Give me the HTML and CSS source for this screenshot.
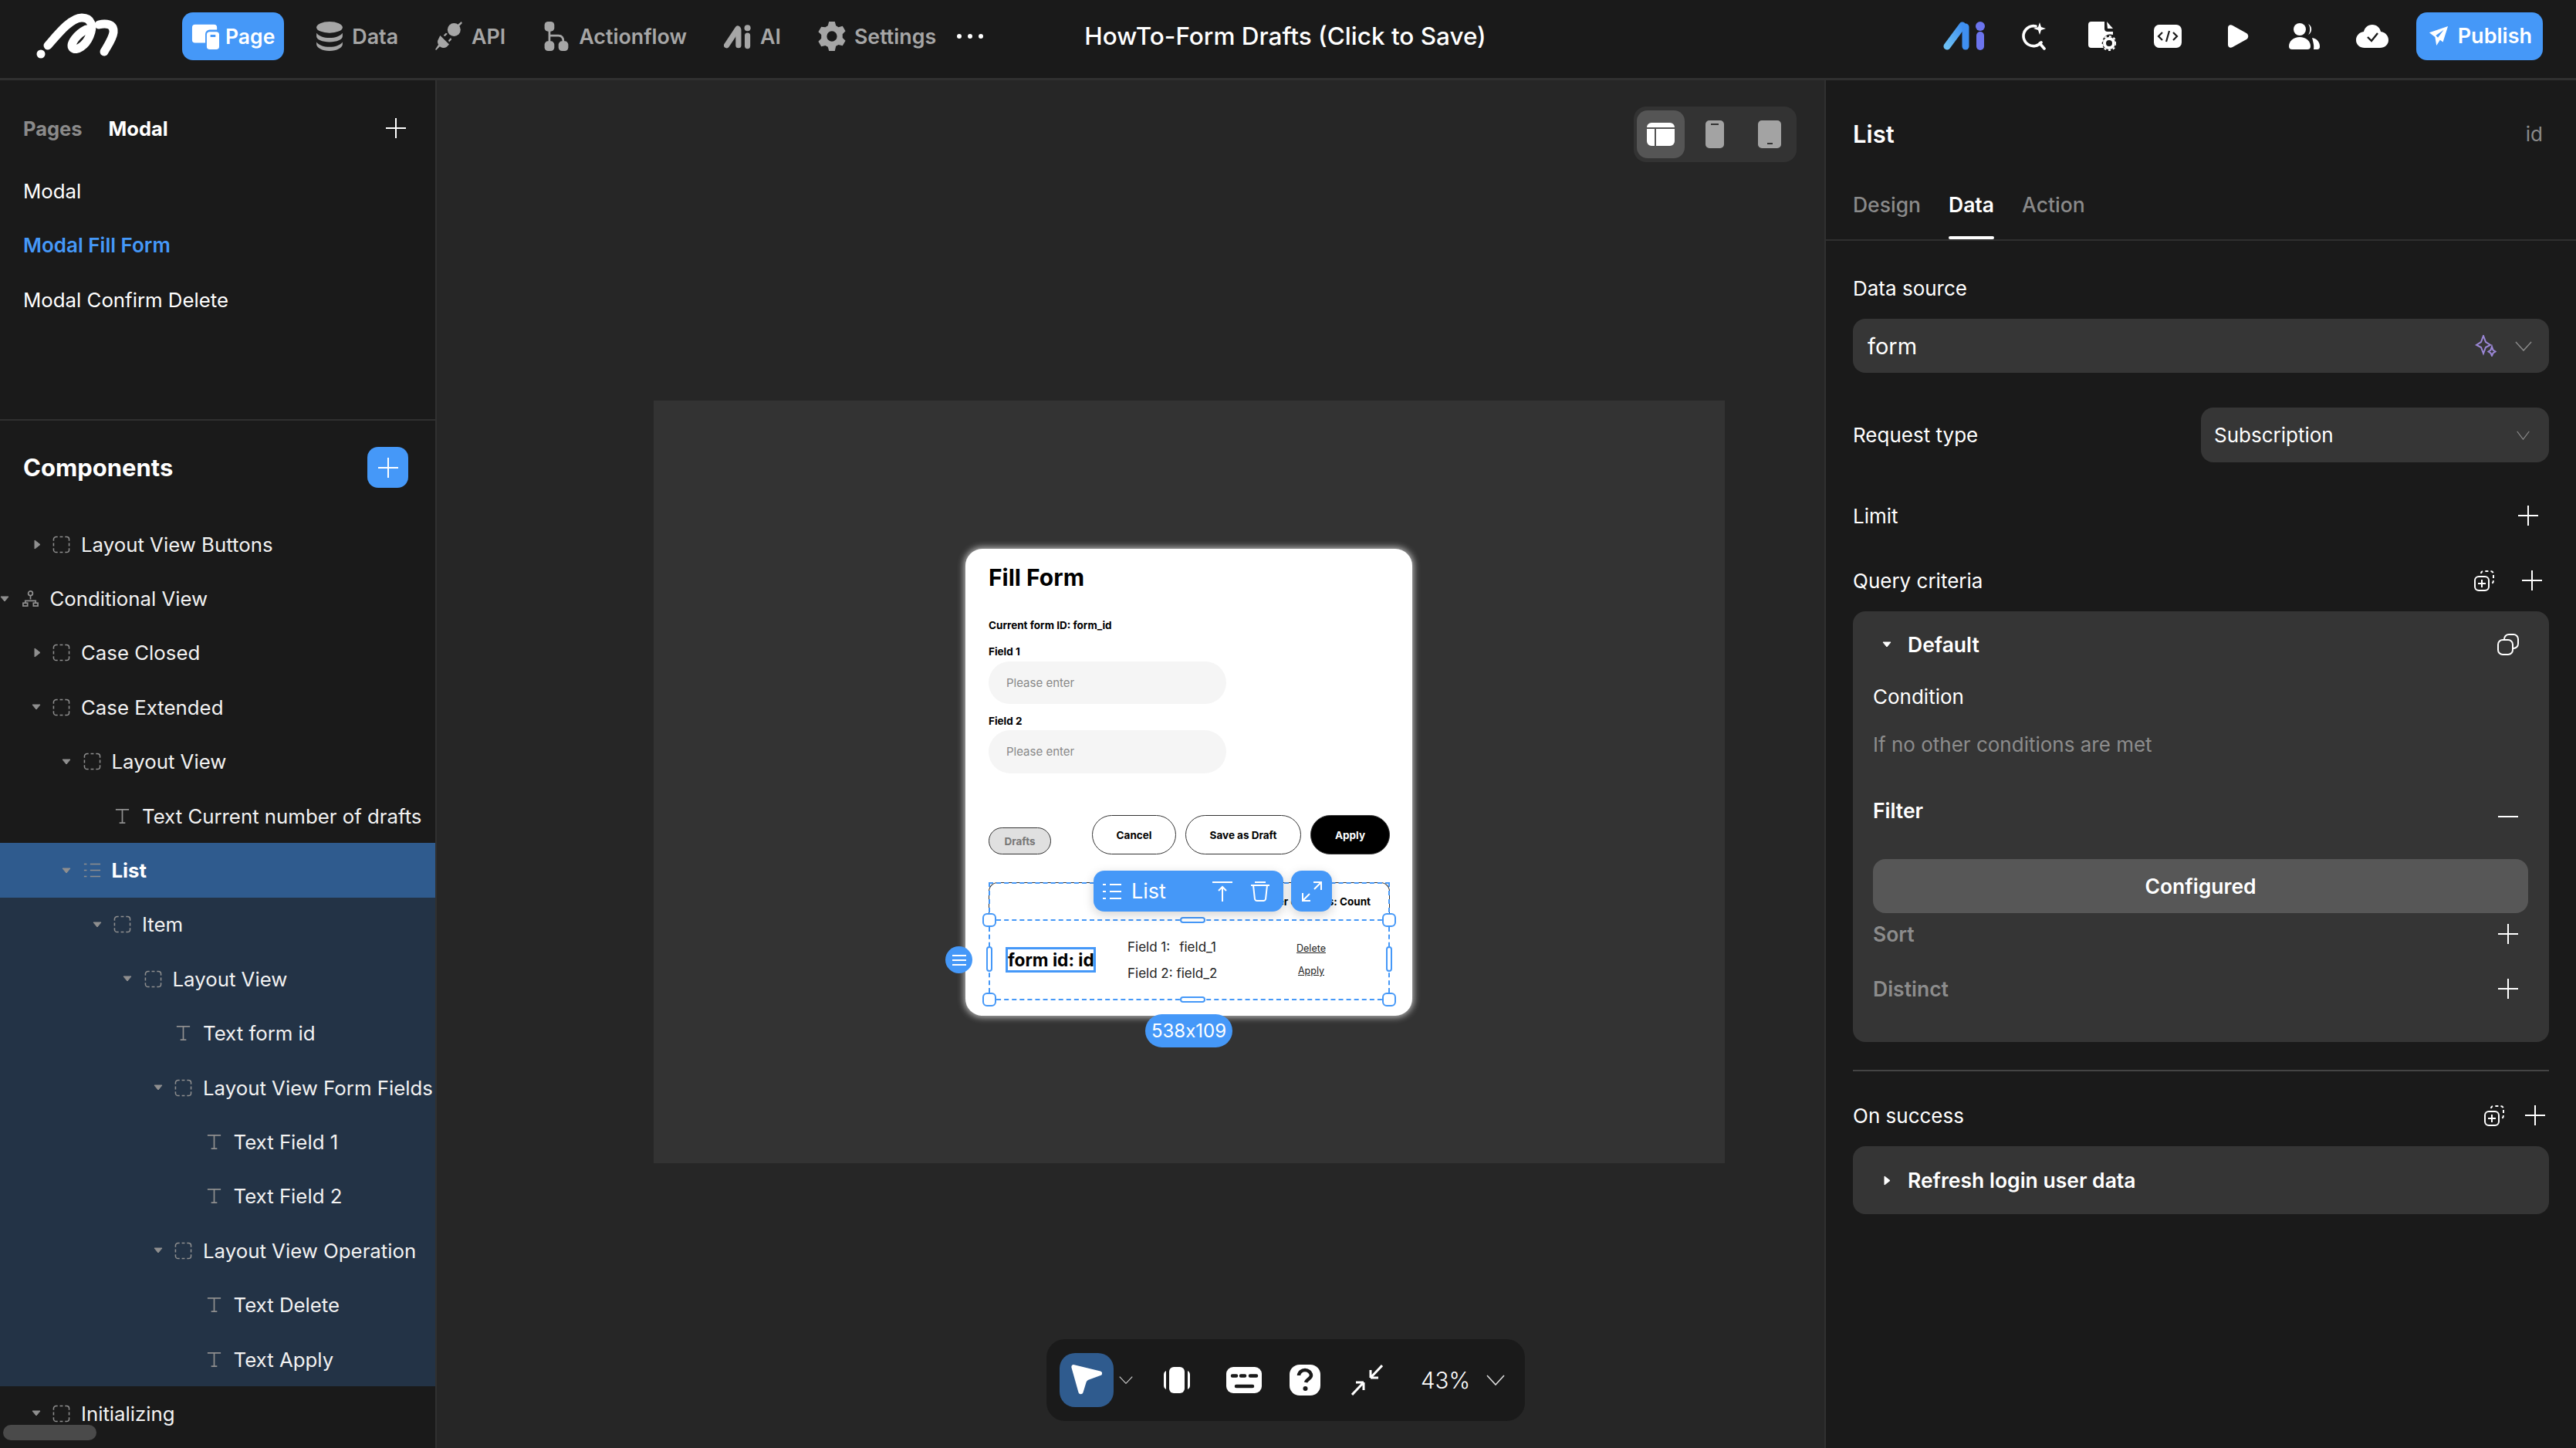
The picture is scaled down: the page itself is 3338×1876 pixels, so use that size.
FILE: index.html
```html
<!DOCTYPE html>
<html lang="en">
<head>
  <meta charset="UTF-8">
  <title>HowTo-Form Drafts</title>
  <link rel="stylesheet" href="styles.css">
</head>
<body>
  <svg class="sprite" xmlns="http://www.w3.org/2000/svg">
    <symbol id="i-plus" viewBox="0 0 28 28"><path d="M14 1v26M1 14h26" fill="none" stroke="currentColor" stroke-width="2"/></symbol>
    <symbol id="i-box" viewBox="0 0 24 24"><path d="M7 1.500H5a3.500 3.500 0 0 0-3.500 3.500v2M10 1.500h4M17 1.500h2a3.500 3.500 0 0 1 3.500 3.500v2M22.500 10v4M22.500 17v2a3.500 3.500 0 0 1-3.500 3.500h-2M14 22.500h-4M7 22.500H5A3.500 3.500 0 0 1 1.500 19v-2M1.500 14v-4" fill="none" stroke="currentColor" stroke-width="1.600"/></symbol>
    <symbol id="i-t" viewBox="0 0 24 24"><path d="M3 3h18M12 3v18M8 21h8" fill="none" stroke="currentColor" stroke-width="1.800"/></symbol>
    <symbol id="i-list" viewBox="0 0 26 24"><path d="M1 3h4M10 3h15M1 12h4M10 12h15M1 21h4M10 21h15" fill="none" stroke="currentColor" stroke-width="1.800"/></symbol>
    <symbol id="i-down" viewBox="0 0 12 8"><path d="M1 1h10L6 7z" fill="currentColor" stroke="currentColor" stroke-linejoin="round"/></symbol>
    <symbol id="i-right" viewBox="0 0 9 13"><path d="M1 1v11l7-5.500z" fill="currentColor" stroke="currentColor" stroke-linejoin="round"/></symbol>
    <symbol id="i-chev" viewBox="0 0 24 14" preserveAspectRatio="none"><path d="M1 1l11 12L23 1" fill="none" stroke="currentColor" stroke-width="1.600"/></symbol>
    <symbol id="i-addbox" viewBox="0 0 28 28"><rect x="2" y="9" width="18" height="18" rx="5" fill="none" stroke="currentColor" stroke-width="2"/><path d="M11 13v10M6 18h10" stroke="currentColor" stroke-width="2"/><path d="M10 5c0-2 1-3 4-3h8c3 0 4 2 4 4v8c0 2-1 4-3 4" fill="none" stroke="currentColor" stroke-width="2" stroke-dasharray="4 3"/></symbol>
  </svg>

  <header class="topbar">
    <div class="topbar-left">
      <svg class="logo" viewBox="0 0 108 60"><g fill="none" stroke="#fff" stroke-width="11" stroke-linecap="round"><path d="M14 42C28 26 44 6 58 6c12 0 16 10 10 24-5 12-17 20-22 15-4-5 6-18 18-24"/><path d="M80 15c8-2 20-2 19 10-1 8-8 18-12 25"/></g><circle cx="5" cy="53" r="5.500" fill="#fff"/></svg>
      <nav class="nav">
        <a class="nav-item active">
          <svg viewBox="0 0 38 36"><path fill="#fff" d="M5 2h26a4 4 0 0 1 4 4v3H25a6 6 0 0 0-6 6v12H5a4 4 0 0 1-4-4V6a4 4 0 0 1 4-4z"/><path fill="#fff" fill-rule="evenodd" d="M25 12h9a4 4 0 0 1 4 3v17a4 4 0 0 1-4 4h-9a4 4 0 0 1-4-4V16a4 4 0 0 1 4-4zm1 4v3h7v-3z"/></svg>
          Page</a>
        <a class="nav-item">
          <svg viewBox="0 0 34 36"><g fill="currentColor"><ellipse cx="17" cy="7" rx="16" ry="7"/><path d="M1 14c3 4 9 6 16 6s13-2 16-6v4c0 4-7 7-16 7S1 22 1 18z"/><path d="M1 25c3 4 9 6 16 6s13-2 16-6v3c0 4-7 8-16 8S1 32 1 28z"/></g></svg>
          Data</a>
        <a class="nav-item">
          <svg viewBox="0 0 34 36"><g fill="currentColor"><circle cx="23" cy="10" r="8"/><path d="M27 4l5-4 1 2-5 5z"/><path d="M6 17l11 11-3 3a7 7 0 0 1-9-1 7 7 0 0 1-1-9z"/><path d="M6 30l-5 5-1-1 4-6zM10 17l3-3 2 1-3 3zM16 23l3-3 1 2-3 3z"/></g></svg>
          API</a>
        <a class="nav-item">
          <svg viewBox="0 0 34 42"><g fill="currentColor"><rect x="0" y="0" width="14" height="14" rx="5"/><rect x="0" y="28" width="14" height="14" rx="5"/><rect x="20" y="28" width="14" height="14" rx="5"/></g><path d="M7 12v18M7 20h13c5 0 7 3 7 9" fill="none" stroke="currentColor" stroke-width="3"/></svg>
          Actionflow</a>
        <a class="nav-item">
          <svg viewBox="0 0 40 36"><path d="M4 31L20 7" fill="none" stroke="currentColor" stroke-width="8" stroke-linecap="round"/><path d="M21 9v22" stroke="currentColor" stroke-width="8" stroke-linecap="round"/><path d="M34 17v15" stroke="currentColor" stroke-width="8" stroke-linecap="round"/><circle cx="34" cy="6" r="4.500" fill="currentColor"/></svg>
          AI</a>
        <a class="nav-item">
          <svg viewBox="0 0 36 40"><path fill="currentColor" fill-rule="evenodd" d="M14 0h8l1.500 5.500 3.500 2 5.500-1.500 4 7-4 4v5l4 4-4 7-5.500-1.500-3.500 2L22 40h-8l-1.500-5.500-3.500-2-5.500 1.500-4-7 4-4v-5l-4-4 4-7L9 7.500l3.500-2zM18 13a7 7 0 1 0 0 14 7 7 0 0 0 0-14z"/></svg>
          Settings</a>
        <span class="nav-more"><i></i><i></i><i></i></span>
      </nav>
    </div>
    <div class="doc-title">HowTo-Form Drafts (Click to Save)</div>
    <div class="topbar-right">
      <svg class="ic-ai" viewBox="0 0 56 38"><defs><linearGradient id="ai-g" x1="0" y1="1" x2="1" y2="0"><stop offset="0" stop-color="#6cc0f5"/><stop offset="1" stop-color="#3f8ff0"/></linearGradient></defs><path d="M6 32L26 5" stroke="url(#ai-g)" stroke-width="9" stroke-linecap="round"/><path d="M30 7v25" stroke="#3f8ff0" stroke-width="9" stroke-linecap="round"/><circle cx="49" cy="6" r="6" fill="#6c74ee"/><path d="M49 18v14" stroke="#6c74ee" stroke-width="10" stroke-linecap="round"/></svg>
      <svg class="ic-search" viewBox="0 0 34 36"><path d="M20 5a13 13 0 1 0 7 21M25 27l6 7" fill="none" stroke="#fff" stroke-width="3.600" stroke-linecap="round"/><path d="M25 0l2 6 6 2-6 2-2 6-2-6-6-2 6-2z" fill="#fff"/></svg>
      <svg class="ic-doc" viewBox="0 0 36 38"><path fill="#fff" d="M4 0h17v9a4 4 0 0 0 4 4h7v4a11 11 0 0 0-12 17H4a4 4 0 0 1-4-4V4a4 4 0 0 1 4-4z"/><path fill="#fff" d="M24 0l8 9h-7z"/><circle cx="27" cy="28" r="6" fill="none" stroke="#fff" stroke-width="4"/><circle cx="27" cy="28" r="9" fill="none" stroke="#fff" stroke-width="2" stroke-dasharray="3 3"/></svg>
      <svg class="ic-code" viewBox="0 0 36 30"><rect width="36" height="30" rx="7" fill="#fff"/><path d="M11 10l-5 5 5 5M25 10l5 5-5 5M20 8l-4 14" fill="none" stroke="#1a1a1a" stroke-width="2.200"/></svg>
      <svg class="ic-play" viewBox="0 0 28 30"><path fill="#fff" d="M1 4c0-3 3-5 6-3l18 10c3 2 3 6 0 8L7 29c-3 2-6 0-6-3z"/></svg>
      <svg class="ic-users" viewBox="0 0 40 34"><g fill="#fff"><circle cx="14" cy="8" r="8"/><path d="M0 30c0-7 6-12 14-12s14 5 14 12c0 3-2 4-4 4H4c-2 0-4-1-4-4z"/><path d="M25 1a8 8 0 0 1 0 14c3-4 3-10 0-14z"/><path d="M30 19c6 1 10 5 10 11 0 3-1 4-4 4h-4c1-5-1-11-2-15z"/></g></svg>
      <svg class="ic-cloud" viewBox="0 0 42 30"><path fill="#fff" d="M21 0c6 0 10 4 11 9 6 1 10 5 10 11 0 6-5 10-11 10H11C5 30 0 26 0 20c0-6 4-10 10-11 1-5 5-9 11-9z"/><path d="M15 16l5 5 8-10" fill="none" stroke="#1a1a1a" stroke-width="2.400"/></svg>
      <a class="publish">
        <svg viewBox="0 0 28 30"><path fill="#fff" d="M27 1L1 10l8 6 2 12 5-8 4 3zM10 14l11-8-8 11z"/></svg>
        Publish</a>
    </div>
  </header>

  <main class="workspace">
    <aside class="left-panel">
      <section class="pages">
        <div class="pages-head">
          <span class="muted-tab">Pages</span>
          <span class="on-tab">Modal</span>
          <svg class="plus"><use href="#i-plus"/></svg>
        </div>
        <div class="page-row">Modal</div>
        <div class="page-row current">Modal Fill Form</div>
        <div class="page-row">Modal Confirm Delete</div>
      </section>
      <section class="components">
        <div class="comp-head">
          <h2>Components</h2>
          <a class="add-btn"><svg><use href="#i-plus"/></svg></a>
        </div>
        <div class="tree">
          <div class="row d1"><svg class="caret closed"><use href="#i-right"/></svg><svg class="node"><use href="#i-box"/></svg>Layout View Buttons</div>
          <div class="row d0"><svg class="caret"><use href="#i-down"/></svg><svg class="node" viewBox="0 0 24 24"><g fill="none" stroke="currentColor" stroke-width="1.800"><circle cx="12" cy="5" r="3"/><path d="M12 8v5M5 18v-3h14v3"/><rect x="2" y="18" width="6" height="4"/><rect x="16" y="18" width="6" height="4"/></g></svg>Conditional View</div>
          <div class="row d1"><svg class="caret closed"><use href="#i-right"/></svg><svg class="node"><use href="#i-box"/></svg>Case Closed</div>
          <div class="row d1"><svg class="caret"><use href="#i-down"/></svg><svg class="node"><use href="#i-box"/></svg>Case Extended</div>
          <div class="row d2"><svg class="caret"><use href="#i-down"/></svg><svg class="node"><use href="#i-box"/></svg>Layout View</div>
          <div class="row d3"><span class="caret"></span><svg class="node"><use href="#i-t"/></svg>Text Current number of drafts</div>
          <div class="row d2 selected"><svg class="caret"><use href="#i-down"/></svg><svg class="node"><use href="#i-list"/></svg>List</div>
          <div class="row d3 child"><svg class="caret"><use href="#i-down"/></svg><svg class="node"><use href="#i-box"/></svg>Item</div>
          <div class="row d4 child"><svg class="caret"><use href="#i-down"/></svg><svg class="node"><use href="#i-box"/></svg>Layout View</div>
          <div class="row d5 child"><span class="caret"></span><svg class="node"><use href="#i-t"/></svg>Text form id</div>
          <div class="row d5 child"><svg class="caret"><use href="#i-down"/></svg><svg class="node"><use href="#i-box"/></svg>Layout View Form Fields</div>
          <div class="row d6 child"><span class="caret"></span><svg class="node"><use href="#i-t"/></svg>Text Field 1</div>
          <div class="row d6 child"><span class="caret"></span><svg class="node"><use href="#i-t"/></svg>Text Field 2</div>
          <div class="row d5 child"><svg class="caret"><use href="#i-down"/></svg><svg class="node"><use href="#i-box"/></svg>Layout View Operation</div>
          <div class="row d6 child"><span class="caret"></span><svg class="node"><use href="#i-t"/></svg>Text Delete</div>
          <div class="row d6 child"><span class="caret"></span><svg class="node"><use href="#i-t"/></svg>Text Apply</div>
          <div class="row d1"><svg class="caret"><use href="#i-down"/></svg><svg class="node"><use href="#i-box"/></svg>Initializing</div>
        </div>
      </section>
      <div class="h-scroll"></div>
    </aside>

    <section class="canvas">
      <div class="device-switch">
        <span class="device on"><svg viewBox="0 0 36 30"><path fill="#fff" d="M6 0h24a6 6 0 0 1 6 6H0a6 6 0 0 1 6-6zM0 8h10v22H6a6 6 0 0 1-6-6zM12 8h24v16a6 6 0 0 1-6 6H12z"/></svg></span>
        <span class="device"><svg viewBox="0 0 24 36"><path fill="#a3a3a3" fill-rule="evenodd" d="M5 0h14a5 5 0 0 1 5 5v26a5 5 0 0 1-5 5H5a5 5 0 0 1-5-5V5a5 5 0 0 1 5-5zm2 4v2h10V4z"/></svg></span>
        <span class="device"><svg viewBox="0 0 30 36"><path fill="#a3a3a3" fill-rule="evenodd" d="M5 0h20a5 5 0 0 1 5 5v26a5 5 0 0 1-5 5H5a5 5 0 0 1-5-5V5a5 5 0 0 1 5-5zm7 29v2h7v-2z"/></svg></span>
      </div>

      <div class="artboard">
        <div class="form-card">
          <h1 class="form-title">Fill Form</h1>
          <div class="form-current">Current form ID: form_id</div>
          <label class="field-label">Field 1</label>
          <div class="input">Please enter</div>
          <label class="field-label second">Field 2</label>
          <div class="input second">Please enter</div>
          <div class="actions">
            <span class="btn drafts">Drafts</span>
            <span class="btn cancel">Cancel</span>
            <span class="btn save">Save as Draft</span>
            <span class="btn apply">Apply</span>
          </div>
          <div class="list-head">Current number of drafts: Count</div>
          <div class="item-row">
            <div class="form-id">form id: id</div>
            <div class="item-fields">
              <div class="f1"><span>Field 1:</span><span>field_1</span></div>
              <div>Field 2: field_2</div>
            </div>
            <div class="item-ops">
              <u>Delete</u>
              <u>Apply</u>
            </div>
          </div>

          <div class="sel sel-list"></div>
          <div class="sel sel-item">
            <i class="h corner tl"></i><i class="h corner tr"></i><i class="h corner bl"></i><i class="h corner br"></i>
            <i class="h pill-x top"></i><i class="h pill-x bottom"></i>
            <i class="h pill-y left"></i><i class="h pill-y right"></i>
          </div>
          <div class="sel-menu"><svg viewBox="0 0 18 16"><path d="M0 2h18M0 8h18M0 14h18" stroke="#fff" stroke-width="1.800"/></svg></div>
          <div class="sel-bar">
            <svg class="sb-list"><use href="#i-list"/></svg>
            <span class="sb-name">List</span>
            <svg class="sb-up" viewBox="0 0 26 26"><path d="M0 1h26M13 7v19M8 12l5-5 5 5" fill="none" stroke="#fff" stroke-width="2"/></svg>
            <svg class="sb-trash" viewBox="0 0 26 26"><path d="M1 5h24M6 1h14M4 5l2 18a3 3 0 0 0 3 2h8a3 3 0 0 0 3-2l2-18" fill="none" stroke="#fff" stroke-width="2"/></svg>
          </div>
          <div class="sel-expand"><svg viewBox="0 0 28 28"><path d="M2 26l9-9M2 16v10h10M26 2l-9 9M16 2h10v10" fill="none" stroke="#fff" stroke-width="2"/></svg></div>
          <div class="size-tag">538x109</div>
        </div>
      </div>

      <div class="dock">
        <a class="tool-select"><svg viewBox="0 0 40 40"><path fill="#fff" d="M3 0C1 0 0 2 .5 4l9 32c1 3 5 3 6 0l4-13c.5-2 2-3 3.500-3.500L38 14c3-1 3-4 0-5.500z"/></svg></a>
        <svg class="dock-chev"><use href="#i-chev"/></svg>
        <svg class="t-phone" viewBox="0 0 34 34"><rect x="7" y="0" width="20" height="34" rx="6" fill="#fff"/><path d="M3 5C1 6 0 8 0 10v14c0 2 1 4 3 5zM31 5c2 1 3 3 3 5v14c0 2-1 4-3 5z" fill="#fff"/></svg>
        <svg class="t-keys" viewBox="0 0 46 34"><rect width="46" height="34" rx="9" fill="#fff"/><path d="M8 11.500h5M19 11.500h5M31 11.500h8M13 25h21" stroke="#1a1a1a" stroke-width="4.500" stroke-linecap="round"/></svg>
        <svg class="t-help" viewBox="0 0 40 40"><rect width="40" height="40" rx="13" fill="#fff"/><path d="M12 14c0-4 4-7 8-7s8 3 8 7-6 5-7 9" fill="none" stroke="#1a1a1a" stroke-width="4.500"/><circle cx="20.500" cy="31" r="3" fill="#1a1a1a"/></svg>
        <svg class="t-shrink" viewBox="0 0 41 40"><path d="M1 39l15-16M16 23H6M16 23v10M40 1L25 17M25 17h10M25 17V7" fill="none" stroke="#fff" stroke-width="3"/></svg>
        <span class="zoom-val">43%</span>
        <svg class="zoom-chev"><use href="#i-chev"/></svg>
      </div>
    </section>

    <aside class="right-panel">
      <div class="rp-head"><h2>List</h2><span class="rp-id">id</span></div>
      <div class="tabs">
        <span>Design</span>
        <span class="on">Data</span>
        <span>Action</span>
      </div>
      <div class="rp-body">
        <div class="line first">Data source</div>
        <div class="select big">
          <span>form</span>
          <svg class="spark" viewBox="0 0 28 28"><g fill="none" stroke="#9b87d6" stroke-width="2"><path d="M11 1l3 8 6 4-6 3-3 8-3-8-6-3 6-4z"/><path d="M22 15l1.500 4.500 3 2-3 2L22 27l-1.500-3.500-3-2 3-2z"/></g></svg>
          <svg class="chev"><use href="#i-chev"/></svg>
        </div>
        <div class="line req">
          <span>Request type</span>
          <div class="select small"><span>Subscription</span><svg class="chev"><use href="#i-chev"/></svg></div>
        </div>
        <div class="line limit"><span>Limit</span><svg class="plus p-limit"><use href="#i-plus"/></svg></div>
        <div class="line query">
          <span>Query criteria</span>
          <span class="tools"><svg class="addbox"><use href="#i-addbox"/></svg><svg class="plus"><use href="#i-plus"/></svg></span>
        </div>
        <div class="criteria">
          <div class="c-line c-default">
            <span class="c-title"><svg class="tri"><use href="#i-down"/></svg>Default</span>
            <svg class="copy" viewBox="0 0 28 28"><rect x="1" y="8" width="19" height="19" rx="6" fill="none" stroke="currentColor" stroke-width="2"/><path d="M9 8V7a6 6 0 0 1 6-6h6a6 6 0 0 1 6 6v6a6 6 0 0 1-6 6h-1" fill="none" stroke="currentColor" stroke-width="2"/></svg>
          </div>
          <div class="c-line c-cond">Condition</div>
          <div class="c-line c-note">If no other conditions are met</div>
          <div class="c-line c-filter"><b>Filter</b><svg class="minus" viewBox="0 0 28 28"><path d="M1 22h26" stroke="currentColor" stroke-width="2"/></svg></div>
          <div class="configured">Configured</div>
          <div class="c-line c-sort"><b class="dim">Sort</b><svg class="plus"><use href="#i-plus"/></svg></div>
          <div class="c-line c-distinct"><b class="dim">Distinct</b><svg class="plus"><use href="#i-plus"/></svg></div>
        </div>
        <hr class="rule">
        <div class="line success">
          <span>On success</span>
          <span class="tools tight"><svg class="addbox"><use href="#i-addbox"/></svg><svg class="plus"><use href="#i-plus"/></svg></span>
        </div>
        <div class="refresh"><svg class="tri r"><use href="#i-right"/></svg>Refresh login user data</div>
      </div>
    </aside>
  </main>
</body>
</html>
```

FILE: styles.css
```css
* { box-sizing: border-box; }

html, body {
  margin: 0;
  height: 100%;
}

body {
  display: flex;
  flex-direction: column;
  width: 3338px;
  height: 1876px;
  overflow: hidden;
  background: #1a1a1a;
  color: #fff;
  font-family: "Inter", "Liberation Sans", sans-serif;
  font-size: 25.800px;
}

.sprite { display: none; }
svg { display: block; flex: none; }
h1, h2 { margin: 0; }

/* top bar */
.topbar {
  flex: none;
  display: grid;
  grid-template-columns: 1fr auto 1fr;
  align-items: center;
  height: 104px;
  padding: 0 43px 8px 48px;
  border-bottom: 3px solid #303030;
}

.topbar-left { display: flex; align-items: center; }
.logo { width: 108px; height: 60px; overflow: visible; }

.nav {
  display: flex;
  align-items: center;
  gap: 48px;
  margin-left: 80px;
}

.nav-item {
  display: flex;
  align-items: center;
  gap: 11px;
  color: #a6a6a6;
  font-size: 26.800px;
  font-weight: 600;
}
.nav-item svg { width: 36px; height: 38px; }

.nav-item.active {
  gap: 8px;
  height: 62px;
  margin-right: -7px;
  padding: 0 12px;
  border-radius: 14px;
  background: #4598f8;
  color: #fff;
  font-size: 26.500px;
}

.nav-more { display: flex; gap: 8px; margin-left: -21px; }
.nav-more i { width: 6px; height: 6px; border-radius: 50%; background: #fff; }

.doc-title {
  margin-right: 12px;
  font-size: 31.500px;
  font-weight: 500;
}

.topbar-right {
  display: flex;
  align-items: center;
  justify-content: flex-end;
}
.ic-ai { width: 56px; height: 38px; }
.ic-search { width: 34px; height: 36px; margin-left: 45px; }
.ic-doc { width: 36px; height: 38px; margin-left: 54px; }
.ic-code { width: 36px; height: 30px; margin-left: 49px; }
.ic-play { width: 28px; height: 30px; margin-left: 59px; }
.ic-users { width: 40px; height: 34px; margin-left: 52px; }
.ic-cloud { width: 42px; height: 30px; margin-left: 47px; }

.publish {
  display: flex;
  align-items: center;
  gap: 12px;
  height: 62px;
  margin-left: 36px;
  padding: 0 14px 0 16px;
  border-radius: 14px;
  background: #4598f8;
  font-size: 27px;
  font-weight: 600;
}
.publish svg { width: 26px; height: 28px; }

/* three columns */
.workspace {
  flex: 1;
  display: grid;
  grid-template-columns: 566px 1fr 974px;
  min-height: 0;
}

.left-panel {
  position: relative;
  overflow: hidden;
  border-right: 2px solid #303030;
}

.pages {
  height: 441px;
  padding-top: 40px;
  border-bottom: 2px solid #303030;
}

.pages-head {
  display: flex;
  align-items: center;
  height: 44px;
  margin-bottom: 24px;
  padding: 0 37px 0 30px;
  font-size: 25.500px;
  font-weight: 700;
}
.muted-tab { color: #8a8a8a; }
.on-tab { margin-left: 34px; }
.pages-head .plus { margin-left: auto; }

.plus { width: 28px; height: 28px; color: #fff; }

.page-row {
  display: flex;
  align-items: center;
  height: 70.500px;
  padding-left: 30px;
}
.page-row.current { color: #4598f8; font-size: 26px; font-weight: 600; }

.comp-head {
  display: flex;
  align-items: center;
  justify-content: space-between;
  height: 125px;
  padding: 0 35px 4px 30px;
}
.comp-head h2 { font-size: 31px; font-weight: 700; }

.add-btn {
  display: flex;
  align-items: center;
  justify-content: center;
  width: 53px;
  height: 53px;
  border-radius: 14px;
  background: #4598f8;
}
.add-btn svg { width: 28px; height: 28px; }

.row {
  display: flex;
  align-items: center;
  height: 70.400px;
  white-space: nowrap;
  color: #f2f2f2;
}
.caret { width: 12px; height: 10px; margin: 0 15.500px 0 2px; color: #8f8f8f; }
.caret.closed { width: 9px; height: 13px; margin: 0 15.500px 0 5px; }
.node { width: 23px; height: 23px; margin-right: 14px; color: #8f8f8f; }
.d0 { margin-left: -2px; }
.d1 { padding-left: 38.500px; }
.d2 { padding-left: 78px; }
.d3 { padding-left: 117.500px; }
.d4 { padding-left: 157px; }
.d5 { padding-left: 196.500px; }
.d6 { padding-left: 236px; }
.row.selected { background: #2f5b8e; color: #fff; font-weight: 700; }
.row.child { background: #233346; }

.h-scroll {
  position: absolute;
  left: 4px;
  bottom: 10px;
  width: 121px;
  height: 20px;
  border-radius: 10px;
  background: #4a4a4a;
}

/* canvas */
.canvas {
  position: relative;
  background: #262626;
}

.device-switch {
  position: absolute;
  top: 34px;
  right: 36px;
  display: flex;
  align-items: center;
  width: 211px;
  height: 72px;
  padding-left: 4px;
  border-radius: 16px;
  background: #333;
}
.device {
  display: flex;
  align-items: center;
  justify-content: center;
  width: 62px;
  height: 62px;
  border-radius: 14px;
}
.device.on { background: #555; }
.device:nth-child(2) { margin-left: 8px; }
.device:nth-child(3) { margin-left: 9px; }
.device:nth-child(1) svg { width: 36px; height: 30px; }
.device:nth-child(2) svg { width: 24px; height: 36px; }
.device:nth-child(3) svg { width: 30px; height: 36px; }

.artboard {
  position: absolute;
  left: 281px;
  top: 415px;
  width: 1388px;
  height: 988px;
  background: #333;
}

.form-card {
  position: absolute;
  left: 404px;
  top: 192px;
  width: 579px;
  height: 605px;
  padding: 17px 29px 0 30px;
  border-radius: 22px;
  background: #fff;
  box-shadow: 0 0 9px 2px rgba(255, 255, 255, .65);
  color: #000;
}

.form-title { height: 40px; font-size: 30px; font-weight: 700; line-height: 40px; }
.form-current { height: 20px; margin-top: 32px; font-size: 13.500px; font-weight: 700; line-height: 20px; }
.field-label { display: block; height: 20px; margin-top: 14px; font-size: 13.500px; font-weight: 700; line-height: 20px; }
.field-label.second { margin-top: 12px; }

.input {
  width: 308px;
  height: 55px;
  margin-top: 3px;
  padding-left: 23px;
  border-radius: 28px;
  background: #f5f5f5;
  color: #888;
  font-size: 15px;
  line-height: 55px;
}
.input.second { height: 56px; margin-top: 2px; line-height: 56px; }

.actions {
  display: flex;
  align-items: flex-end;
  gap: 12px;
  height: 51px;
  margin-top: 54px;
  font-size: 13.500px;
  font-weight: 700;
}
.btn {
  display: flex;
  align-items: center;
  justify-content: center;
  height: 51px;
  border: 1px solid #333;
  border-radius: 26px;
}
.drafts { width: 81px; height: 35px; margin-right: auto; background: #e0e0e0; color: #777; }
.cancel { width: 109px; }
.save { width: 150px; }
.apply { width: 103px; background: #000; color: #fff; }

.list-head {
  width: 520px;
  height: 48px;
  margin-top: 36px;
  padding: 13px 24px 0 0;
  border: 1px solid #333;
  border-bottom: 0;
  border-radius: 12px 12px 0 0;
  font-size: 13.500px;
  font-weight: 700;
  line-height: 22px;
  text-align: right;
}

.item-row { display: flex; align-items: center; height: 105px; }

.form-id {
  width: 117px;
  height: 33px;
  margin-left: 22px;
  border: 3px solid #4598f8;
  font-size: 22.700px;
  font-weight: 700;
  line-height: 27px;
  text-align: center;
  white-space: nowrap;
}

.item-fields {
  width: 218px;
  margin-left: 41px;
  font-size: 17px;
  line-height: 34px;
  color: #222;
}
.f1 { display: flex; gap: 12px; }

.item-ops {
  display: flex;
  flex-direction: column;
  align-items: center;
  gap: 11px;
  width: 40px;
  font-size: 12.500px;
  line-height: 18px;
  color: #222;
}

/* selection overlay */
.sel { position: absolute; border: 2px dashed #4598f8; }
.sel-list { left: 30px; top: 432px; width: 520px; height: 50px; border-bottom: 0; }
.sel-item { left: 30px; top: 480px; width: 520px; height: 105px; }

.h { position: absolute; border: 2px solid #4598f8; background: #fff; }
.corner { width: 18px; height: 18px; border-radius: 6px; }
.tl { left: -10px; top: -10px; }
.tr { right: -10px; top: -10px; }
.bl { left: -10px; bottom: -10px; }
.br { right: -10px; bottom: -10px; }
.pill-x { left: 246px; width: 33px; height: 8px; border-radius: 4px; }
.top { top: -5px; }
.bottom { bottom: -5px; }
.pill-y { top: 33px; width: 8px; height: 33px; border-radius: 4px; }
.left { left: -5px; }
.right { right: -5px; }

.sel-menu {
  position: absolute;
  left: -26px;
  top: 515px;
  display: flex;
  align-items: center;
  justify-content: center;
  width: 35px;
  height: 35px;
  border-radius: 50%;
  background: #4598f8;
}
.sel-menu svg { width: 18px; height: 16px; }

.sel-bar {
  position: absolute;
  left: 166px;
  top: 417px;
  display: flex;
  align-items: center;
  width: 246px;
  height: 53px;
  padding-left: 11px;
  border-radius: 14px;
  background: #4598f8;
  box-shadow: 0 4px 14px rgba(0, 0, 0, .18);
  color: #fff;
  font-size: 27px;
}
.sb-list { width: 26px; height: 24px; color: #fff; }
.sb-name { margin-left: 12px; }
.sb-up { width: 26px; height: 26px; margin-left: auto; }
.sb-trash { width: 26px; height: 26px; margin: 0 17px 0 23px; }

.sel-expand {
  position: absolute;
  left: 422px;
  top: 417px;
  display: flex;
  align-items: center;
  justify-content: center;
  width: 53px;
  height: 53px;
  border-radius: 14px;
  background: #4598f8;
  box-shadow: 0 4px 14px rgba(0, 0, 0, .18);
}
.sel-expand svg { width: 28px; height: 28px; }

.size-tag {
  position: absolute;
  left: 233px;
  top: 603px;
  width: 113px;
  height: 43px;
  border-radius: 22px;
  background: #4598f8;
  color: #fff;
  font-feature-settings: "calt" 0;
  font-size: 24px;
  line-height: 43px;
  text-align: center;
}

/* bottom tools */
.dock {
  position: absolute;
  left: 790px;
  bottom: 35px;
  display: flex;
  align-items: center;
  width: 620px;
  height: 106px;
  padding-left: 17px;
  border-radius: 24px;
  background: #1a1a1a;
}
.tool-select {
  display: flex;
  align-items: center;
  justify-content: center;
  width: 70px;
  height: 70px;
  border-radius: 20px;
  background: #2f5b8e;
}
.tool-select svg { width: 40px; height: 40px; }
.dock-chev { width: 18px; height: 10px; margin-left: 7px; color: #ccc; }
.t-phone { width: 34px; height: 34px; margin-left: 40px; }
.t-keys { width: 46px; height: 34px; margin-left: 47px; }
.t-help { width: 40px; height: 40px; margin-left: 36px; }
.t-shrink { width: 41px; height: 40px; margin-left: 40px; }
.zoom-val { margin-left: 49px; font-size: 29.500px; font-weight: 300; }
.zoom-chev { width: 24px; height: 14px; margin-left: 21px; color: #ddd; }

/* right panel */
.right-panel { border-left: 2px solid #303030; }

.rp-head {
  display: flex;
  align-items: center;
  justify-content: space-between;
  height: 138px;
  padding: 0 43px 0 35px;
}
.rp-head h2 { font-size: 31px; font-weight: 600; }
.rp-id { color: #8a8a8a; font-size: 26px; }

.tabs {
  display: flex;
  gap: 36px;
  height: 70px;
  padding-left: 35px;
  border-bottom: 2px solid #303030;
  font-size: 26.500px;
  font-weight: 500;
  color: #8a8a8a;
}
.tabs span { position: relative; height: 68px; line-height: 46px; }
.tabs .on { color: #fff; font-weight: 600; }
.tabs .on::after {
  content: "";
  position: absolute;
  left: 0;
  right: 0;
  bottom: 0;
  height: 4px;
  border-radius: 2px;
  background: #fff;
}

.rp-body { padding: 0 35px; font-size: 26px; }

.line {
  display: flex;
  align-items: center;
  justify-content: space-between;
  height: 40px;
}
.first { margin-top: 41px; }
.req { height: 71px; margin-top: 45px; }
.limit { margin-top: 49px; }
.query { margin-top: 44px; }
.success { margin-top: 37px; }
.p-limit { margin-right: 13px; }

.select {
  display: flex;
  align-items: center;
  height: 70px;
  margin-top: 20px;
  padding-left: 19px;
  border-radius: 16px;
  background: #363636;
}
.select.big { font-size: 29px; }
.select.small {
  width: 451px;
  height: 71px;
  margin-top: 0;
  padding-left: 17px;
}
.select .chev { width: 17px; height: 12px; margin: 0 25px 0 auto; color: #8a8a8a; }
.select.big .spark { width: 28px; height: 28px; margin: 0 24px 0 auto; }
.select.big .chev { width: 22px; height: 13px; margin: 0 22px 0 0; }

.tools { display: flex; align-items: center; gap: 34px; margin-right: 8px; }
.tools.tight { gap: 25px; margin-right: 4px; }
.addbox { width: 28px; height: 28px; color: #fff; }

.criteria {
  height: 558px;
  margin-top: 20px;
  padding: 23px 27px 0 26px;
  border-radius: 16px;
  background: #353535;
}
.c-line {
  display: flex;
  align-items: center;
  justify-content: space-between;
  height: 40px;
}
.c-line .plus, .c-line .copy, .c-line .minus { width: 28px; height: 28px; margin-right: 12px; color: #fff; }
.c-title { display: flex; align-items: center; font-size: 26.500px; font-weight: 600; }
.tri { width: 12px; height: 10px; margin: 0 21px 0 12px; color: #fff; }
.c-cond { margin-top: 27px; }
.c-note { margin-top: 22px; color: #8c8c8c; }
.c-filter { margin-top: 46px; }
.c-line b { font-size: 26.500px; font-weight: 600; }
.c-line b.dim { color: #8c8c8c; }

.configured {
  height: 70px;
  margin-top: 43px;
  border-radius: 16px;
  background: #575757;
  font-size: 26.500px;
  font-weight: 600;
  line-height: 70px;
  text-align: center;
}
.c-sort { margin-top: 7px; }
.c-distinct { margin-top: 31px; }

.rule {
  height: 2px;
  margin: 36px 0 0;
  border: 0;
  background: #444;
}

.refresh {
  display: flex;
  align-items: center;
  height: 88px;
  margin-top: 20px;
  padding-left: 27px;
  border-radius: 16px;
  background: #353535;
  font-size: 26.500px;
  font-weight: 600;
}
.tri.r { width: 9px; height: 13px; margin: 0 22px 0 13px; }
```
